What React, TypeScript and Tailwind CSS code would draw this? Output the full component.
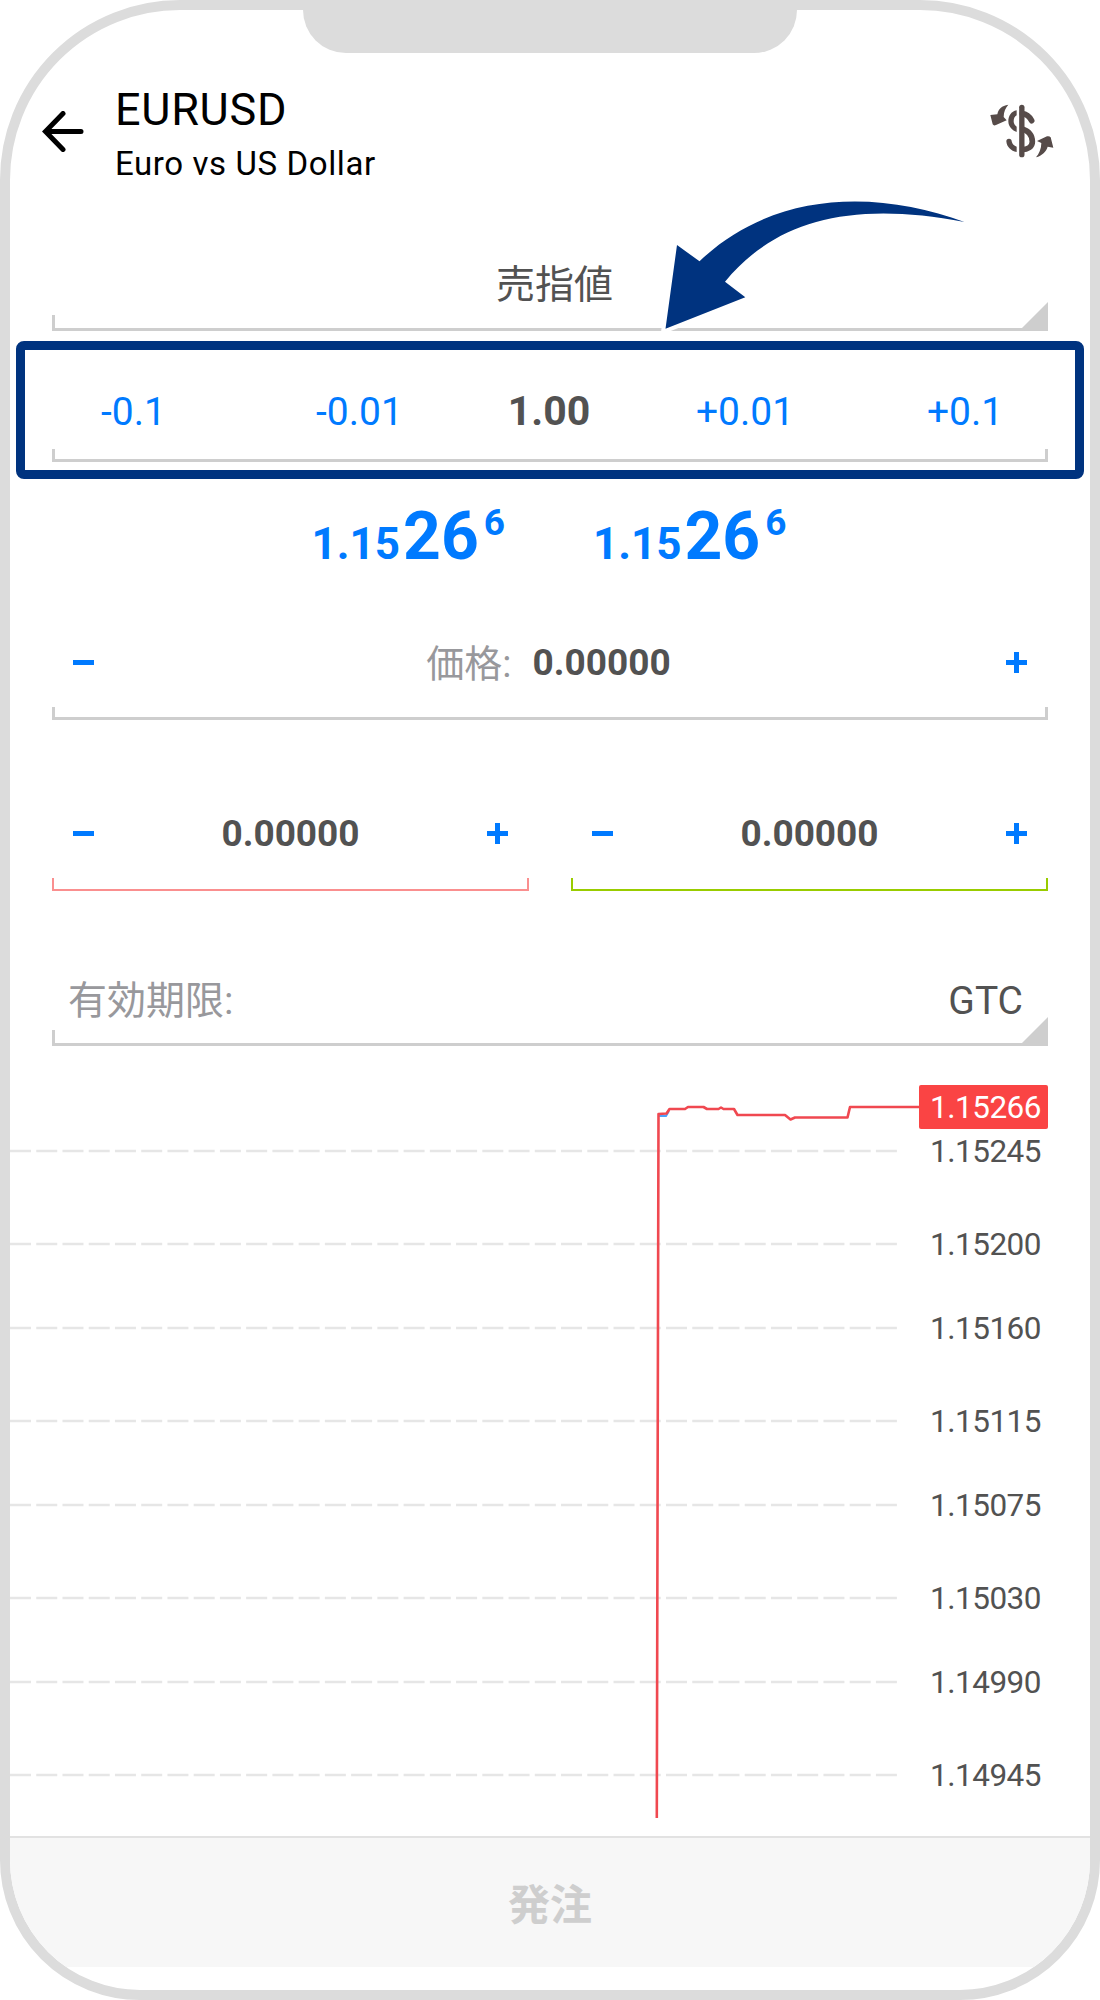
import type { ReactNode } from 'react'

const gridLevels = [
    { y: 66, price: '1.15245' },
    { y: 159, price: '1.15200' },
    { y: 243, price: '1.15160' },
    { y: 336, price: '1.15115' },
    { y: 420, price: '1.15075' },
    { y: 513, price: '1.15030' },
    { y: 597, price: '1.14990' },
    { y: 690, price: '1.14945' },
]

const tickPath =
    'M646.8 733 L648.5 29 L656.5 28.5 L659.5 24 H675 L678 22 H693.5 L697 24 H708.5 L711 22.5 L713.5 24 H724 L727.5 30 H775 L780.5 34.5 L785 32.5 H837.5 L840 22 H909'

function Minus() {
    return <span className="block h-[5px] w-[21px] bg-[#007aff]" />
}

function Plus() {
    return (
        <svg width="21" height="21" viewBox="0 0 21 21" fill="#007aff">
            <path d="M8 0h5v8h8v5h-8v8H8v-8H0V8h8z" />
        </svg>
    )
}

function Select({ children }: { children: ReactNode }) {
    return (
        <div className="relative mx-[42px] flex h-[84px] flex-col justify-end">
            {children}
            <div className="h-4 border-b-[3px] border-l-[3px] border-[#cecece]" />
            <svg className="absolute right-0 bottom-0" width="29" height="29" viewBox="0 0 29 29" fill="#cecece">
                <path d="M29 0v29H0z" />
            </svg>
        </div>
    )
}

function Stepper({ value, line }: { value: string; line: string }) {
    return (
        <div className="w-[477px]">
            <div className="flex h-[50px] items-center justify-between px-[21px]">
                <Minus />
                <span className="pt-[2px] text-[37px] leading-[50px] font-bold text-[#525252]">{value}</span>
                <Plus />
            </div>
            <div className={`mt-5 h-[13px] border-x-2 border-b-2 ${line}`} />
        </div>
    )
}

function Quote() {
    return (
        <div className="flex h-[60px] items-end font-bold text-[#007aff]">
            <span className="text-[44px] leading-[43px]">1.15</span>
            <span className="ml-[3px] text-[66px] leading-[58px]">26</span>
            <span className="mb-[25px] ml-[5px] text-[37px] leading-[36px]">6</span>
        </div>
    )
}

function ExchangeIcon() {
    return (
        <svg width="66" height="56" viewBox="86 70 198 168" fill="#564b49">
            <path d="M144 75C124 78 114 88 111 104L90 106L97 134Q100 139 107 136L139 122L130 112C130 96 136 84 144 75Z" />
            <path d="M227 233C245 228 258 215 262 201L279 204L271 173Q267 168 260 170L230 184L243 190C243 208 236 222 227 233Z" />
            <path d="M169 92C152 95 144 109 144 125C144 141 156 153 169 157V141C163 137 160 131 160 125C160 117 163 110 169 107Z" />
            <path d="M169 201C161 198 156 194 154 185A8 8 0 0 0 138 185C139 202 152 214 169 217Z" />
            <path d="M186 102C199 103 208 112 214 123" fill="none" stroke="#564b49" strokeWidth="17" strokeLinecap="round" />
            <path d="M184 147C206 154 216 167 216 186C216 201 203 209 184 210" fill="none" stroke="#564b49" strokeWidth="17" />
            <path d="M184.500 83V225" stroke="#564b49" strokeWidth="16" strokeLinecap="round" />
        </svg>
    )
}

function Chart() {
    return (
        <div className="relative h-[751px] overflow-hidden">
            <svg className="block" width="1080" height="751" fill="none">
                {gridLevels.map((level) => (
                    <line key={level.price} x1="0" x2="887" y1={level.y} y2={level.y} stroke="#e6e6e6" strokeWidth="2.5" strokeDasharray="21 5.24" />
                ))}
                <path d="M648.5 31H656L659 26" stroke="#4ba3ff" strokeWidth="2" />
                <path d={tickPath} stroke="#f04850" strokeWidth="2.6" strokeLinejoin="round" />
            </svg>
            {gridLevels.map((level) => (
                <span
                    key={level.price}
                    className="absolute right-[49px] text-[31.5px] leading-[36px] tracking-[-0.5px] text-[#525252]"
                    style={{ top: level.y - 17 }}
                >
                    {level.price}
                </span>
            ))}
            <span className="absolute top-0 right-[42px] h-[44px] w-[129px] rounded-[2px] bg-[#fa4444] pr-[7px] text-right text-[31.5px] leading-[46px] tracking-[-0.5px] text-white">
                1.15266
            </span>
        </div>
    )
}

export default function App() {
    return (
        <div className="w-[1100px] bg-white font-[Roboto,'Noto_Sans_CJK_JP',sans-serif]">
            <div className="relative h-[2000px] overflow-hidden rounded-t-[180px] rounded-b-[140px] border-[10px] border-[#dcdcdc] bg-white">
                <div className="mx-auto h-[43px] w-[494px] rounded-b-[43px] bg-[#dcdcdc]" />

                <header className="flex h-[187px] items-start justify-between pr-[35px] pl-[32px]">
                    <div className="flex">
                        <svg className="mt-[58px]" width="42" height="41" viewBox="0 0 42 41" fill="none" stroke="#000" strokeWidth="5" strokeLinecap="round">
                            <path d="M21 2.5L3.5 20.5L21 38.5M4 20.5H39" />
                        </svg>
                        <div className="ml-[31px] pt-[30px] text-black">
                            <h1 className="text-[45px] leading-[54px] tracking-[0.7px]">EURUSD</h1>
                            <p className="text-[33px] leading-[54px] tracking-[0.6px]">Euro vs US Dollar</p>
                        </div>
                    </div>
                    <div className="mt-[50px]">
                        <ExchangeIcon />
                    </div>
                </header>

                <div className="mt-[7px]">
                    <Select>
                        <p className="pr-1 pb-[3px] pl-[13px] text-center text-[39px] leading-[54px] text-[#525252]">売指値</p>
                    </Select>
                </div>

                <div className="mx-[6px] mt-[10px] h-[138px] rounded-lg border-[9px] border-[#00337f]">
                    <div className="mx-[27px] grid h-[99px] grid-cols-[156px_296px_92px_292px_148px] items-center pt-[24px] text-center text-[39px] leading-[50px] text-[#007aff]">
                        <button className="pl-[7px]">-0.1</button>
                        <button className="pl-[7px]">-0.01</button>
                        <span className="pr-[2px] pb-[2px] text-[41px] font-bold text-[#525252]">1.00</span>
                        <button className="pl-[6px]">+0.01</button>
                        <button className="pl-[6px]">+0.1</button>
                    </div>
                    <div className="mx-[27px] h-[13px] border-x-[3px] border-b-[3px] border-[#cecece]" />
                </div>

                <div className="mt-[27px] flex justify-center gap-[88px] pr-[2px]">
                    <Quote />
                    <Quote />
                </div>

                <div className="mx-[42px] mt-[71px]">
                    <div className="flex h-[50px] items-center justify-between px-[21px]">
                        <Minus />
                        <div className="flex items-center pt-[2px] pr-[3px] leading-[50px]">
                            <span className="mr-[21px] pt-[2px] text-[38px] text-[#98989c]">価格:</span>
                            <span className="text-[37px] font-bold text-[#525252]">0.00000</span>
                        </div>
                        <Plus />
                    </div>
                    <div className="mt-5 h-[13px] border-x-[3px] border-b-[3px] border-[#cecece]" />
                </div>

                <div className="mx-[42px] mt-[88px] flex justify-between">
                    <Stepper value="0.00000" line="border-[#fa8f8f]" />
                    <Stepper value="0.00000" line="border-[#99cc00]" />
                </div>

                <div className="mt-[71px]">
                    <Select>
                        <div className="flex justify-between pr-[25px] pb-[2px] pl-4 text-[39px] leading-[54px]">
                            <span className="text-[#98989c]">有効期限:</span>
                            <span className="text-[#525252]">GTC</span>
                        </div>
                    </Select>
                </div>

                <div className="mt-[39px]">
                    <Chart />
                </div>

                <button className="flex h-[131px] w-full items-center justify-center border-t-2 border-[#e2e2e2] bg-[#f7f7f7] pt-[5px] text-[42px] font-bold text-[#cecece]">
                    発注
                </button>

                <svg className="absolute top-[180px] left-[640px]" width="330" height="150" viewBox="650 190 330 150" fill="#00337f">
                    <path
                        d="M964.5 222C880 191 775 189 699.5 261.3L677 245L665.5 328.7L745.3 297.3L725 281.7C775 221 850 200 964.5 222Z"
                        stroke="#fff"
                        strokeWidth="8"
                        paintOrder="stroke"
                    />
                </svg>
            </div>
        </div>
    )
}
